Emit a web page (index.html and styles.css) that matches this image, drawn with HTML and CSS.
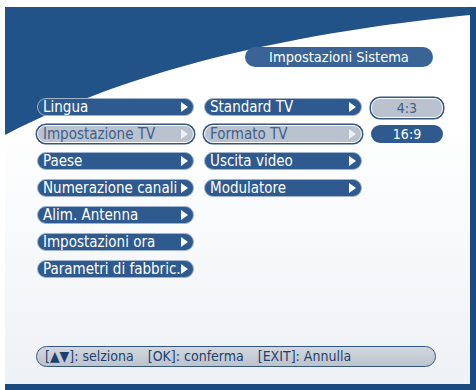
FILE: index.html
```html
<!DOCTYPE html>
<html lang="it">
<head>
    <title>Impostazioni Sistema</title>
    <meta charset="utf-8">
    <link rel="stylesheet" href="styles.css">
</head>
<body>
    <main class="panel">
        <svg class="sky" width="465" height="377" viewBox="0 0 465 377">
            <path d="M0 0 H465 V8 C 330 22, 150 50, 0 128 Z" fill="#215288"/>
        </svg>
        <div class="title-row">
            <div class="title">Impostazioni Sistema</div>
        </div>
        <div class="menus">
            <div class="col col-main">
                <div class="pill">Lingua<span class="arrow"></span></div>
                <div class="pill active">Impostazione TV<span class="arrow"></span></div>
                <div class="pill">Paese<span class="arrow"></span></div>
                <div class="pill">Numerazione canali<span class="arrow"></span></div>
                <div class="pill">Alim. Antenna<span class="arrow"></span></div>
                <div class="pill">Impostazioni ora<span class="arrow"></span></div>
                <div class="pill">Parametri di fabbric.<span class="arrow"></span></div>
            </div>
            <div class="col col-sub">
                <div class="pill">Standard TV<span class="arrow"></span></div>
                <div class="pill active">Formato TV<span class="arrow"></span></div>
                <div class="pill">Uscita video<span class="arrow"></span></div>
                <div class="pill">Modulatore<span class="arrow"></span></div>
            </div>
            <div class="col col-opt">
                <div class="opt active">4:3</div>
                <div class="opt">16:9</div>
            </div>
        </div>
        <div class="help">
            <span>[&#9650;&#9660;]:&nbsp;selziona</span>
            <span>[OK]:&nbsp;conferma</span>
            <span>[EXIT]:&nbsp;Annulla</span>
        </div>
    </main>
</body>
</html>
```

FILE: styles.css
```css
html {
    font-family: "DejaVu Sans Condensed", "DejaVu Sans", sans-serif;
    font-size: 15px;
}
body {
    margin: 0;
    width: 476px;
    height: 390px;
    background: #fff;
    overflow: hidden;
}
.panel {
    position: relative;
    margin: 7px 0 0 5px;
    width: 465px;
    height: 377px;
    border-right: 6px solid #1b4a7e;
    border-bottom: 6px solid #1b4a7e;
    background: linear-gradient(#ffffff 30%, #eef1f5);
    display: flex;
    flex-direction: column;
}
.sky {
    position: absolute;
    left: 0;
    top: 0;
}
.title-row {
    position: relative;
    display: flex;
    justify-content: flex-end;
    padding: 40px 37px 0 0;
}
.title {
    width: 188px;
    height: 20px;
    line-height: 20px;
    border-radius: 10px;
    background: #3a6496;
    color: #fff;
    font-size: 14.5px;
    text-align: center;
}
.menus {
    position: relative;
    display: flex;
    padding: 31px 0 0 32px;
}
.col {
    display: flex;
    flex-direction: column;
    gap: 9px;
}
.col-main {
    width: 157px;
}
.col-sub {
    width: 158px;
    margin-left: 10px;
}
.col-opt {
    margin-left: 9px;
    gap: 7px;
}
.pill {
    position: relative;
    height: 16px;
    line-height: 16px;
    padding-left: 5px;
    border: 1px solid #9fb3cb;
    border-radius: 9px;
    background: #2f5a8f;
    color: #fff;
    white-space: nowrap;
}
.arrow {
    position: absolute;
    right: 5px;
    top: 3px;
    width: 0;
    height: 0;
    border-top: 5px solid transparent;
    border-bottom: 5px solid transparent;
    border-left: 7px solid #fff;
}
.pill.active {
    background: #b9c2ce;
    color: #40608a;
    border-color: #fff;
    box-shadow: 0 0 0 1.5px #34557f;
}
.pill.active .arrow {
    border-left-color: #eef1f5;
}
.opt {
    width: 72px;
    height: 18px;
    line-height: 18px;
    border-radius: 9px;
    background: #2f5a8f;
    color: #fff;
    font-size: 14px;
    text-align: center;
}
.opt.active {
    width: 70px;
    height: 18px;
    border: 1px solid #fff;
    background: #b9c2ce;
    color: #40608a;
    box-shadow: 0 0 0 1.5px #34557f;
}
.help {
    margin: auto 0 17px 31px;
    width: 390px;
    height: 19px;
    line-height: 19px;
    padding-left: 8px;
    border: 1.5px solid #34557f;
    border-radius: 11px;
    background: linear-gradient(#d2d7de, #bcc3cd);
    color: #1f3f6c;
    font-size: 14px;
    display: flex;
    gap: 14px;
}
```
